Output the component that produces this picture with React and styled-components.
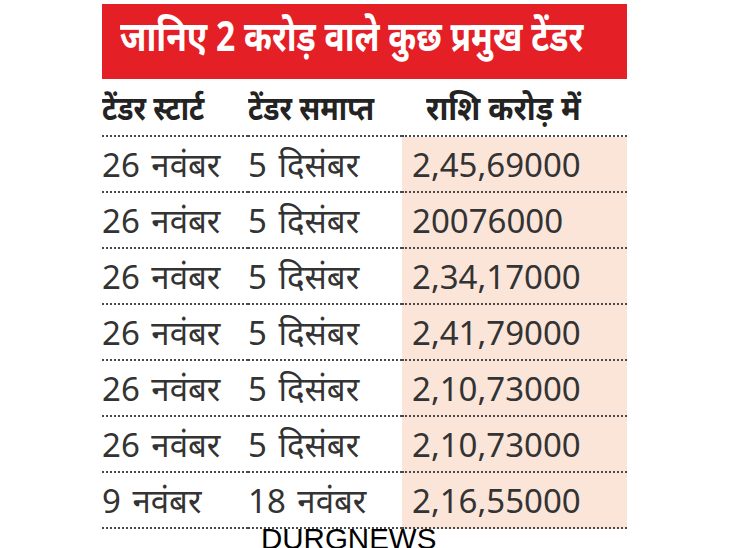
import React from 'react';
import styled, { createGlobalStyle } from 'styled-components';

const GlobalStyle = createGlobalStyle`
    html, body {
        margin: 0;
        padding: 0;
        background: #ffffff;
    }
    body {
        font-family: "Noto Sans", "Noto Sans Devanagari", sans-serif;
        overflow: hidden;
    }
`;

const StyledPage = styled.div`
    position: relative;
    width: 730px;
    height: 548px;
    padding: 4px 0 0 102px;
    box-sizing: border-box;
`;

const StyledTitleBar = styled.h1`
    display: flex;
    align-items: center;
    width: 525px;
    height: 75px;
    margin: 0;
    padding: 0 0 14px 18px;
    box-sizing: border-box;
    background: #e41f26;
    color: #ffffff;
    font-size: 41px;
    font-weight: 700;
    white-space: nowrap;
    overflow: hidden;
`;

// the print headline uses a condensed face, so squeeze the regular one
const StyledSqueeze = styled.span`
    display: inline-block;
    transform: scaleX(${({ $x }) => $x});
    transform-origin: left center;
`;

const StyledTable = styled.div`
    display: grid;
    grid-template-columns: 146px 154px 225px;
    width: 525px;
`;

const StyledRow = styled.div`
    display: contents;
`;

const StyledCell = styled.div`
    display: flex;
    align-items: center;
    height: ${({ $header }) => ($header ? '56px' : '54px')};
    padding-left: ${({ $pad }) => $pad || 0}px;
    border-bottom: 2px dotted #4a4a4a;
    box-sizing: content-box;
    background: ${({ $shade }) => ($shade ? '#fbe5d9' : 'transparent')};
    color: ${({ $header }) => ($header ? '#232323' : '#333333')};
    font-size: 33px;
    font-weight: ${({ $header }) => ($header ? 700 : 400)};
    word-spacing: ${({ $header }) => ($header ? 0 : 3)}px;
    white-space: nowrap;
`;

const StyledWatermark = styled.div`
    position: absolute;
    left: 261px;
    top: 524px;
    font-family: "Liberation Sans", Arial, sans-serif;
    font-size: 29.5px;
    color: #000000;
    line-height: 1;
`;

const headers = [
    { text: 'टेंडर स्टार्ट', pad: 0, x: 0.86 },
    { text: 'टेंडर समाप्त', pad: 0, x: 0.86 },
    { text: 'राशि करोड़ में', pad: 24, x: 0.92 },
];

const rows = [
    ['26 नवंबर', '5 दिसंबर', '2,45,69000'],
    ['26 नवंबर', '5 दिसंबर', '20076000'],
    ['26 नवंबर', '5 दिसंबर', '2,34,17000'],
    ['26 नवंबर', '5 दिसंबर', '2,41,79000'],
    ['26 नवंबर', '5 दिसंबर', '2,10,73000'],
    ['26 नवंबर', '5 दिसंबर', '2,10,73000'],
    ['9 नवंबर', '18 नवंबर', '2,16,55000'],
];

const App = () => {
    return (
        <>
            <GlobalStyle />
            <StyledPage>
                <StyledTitleBar>
                    <StyledSqueeze $x={0.82}>जानिए 2 करोड़ वाले कुछ प्रमुख टेंडर</StyledSqueeze>
                </StyledTitleBar>
                <StyledTable>
                    <StyledRow>
                        {headers.map(h => (
                            <StyledCell $header $pad={h.pad} key={h.text}>
                                <StyledSqueeze $x={h.x}>{h.text}</StyledSqueeze>
                            </StyledCell>
                        ))}
                    </StyledRow>
                    {rows.map((row, idx) => (
                        <StyledRow key={idx}>
                            <StyledCell>{row[0]}</StyledCell>
                            <StyledCell>{row[1]}</StyledCell>
                            <StyledCell $shade $pad={10}>{row[2]}</StyledCell>
                        </StyledRow>
                    ))}
                </StyledTable>
                <StyledWatermark>DURGNEWS</StyledWatermark>
            </StyledPage>
        </>
    );
};

export default App;
